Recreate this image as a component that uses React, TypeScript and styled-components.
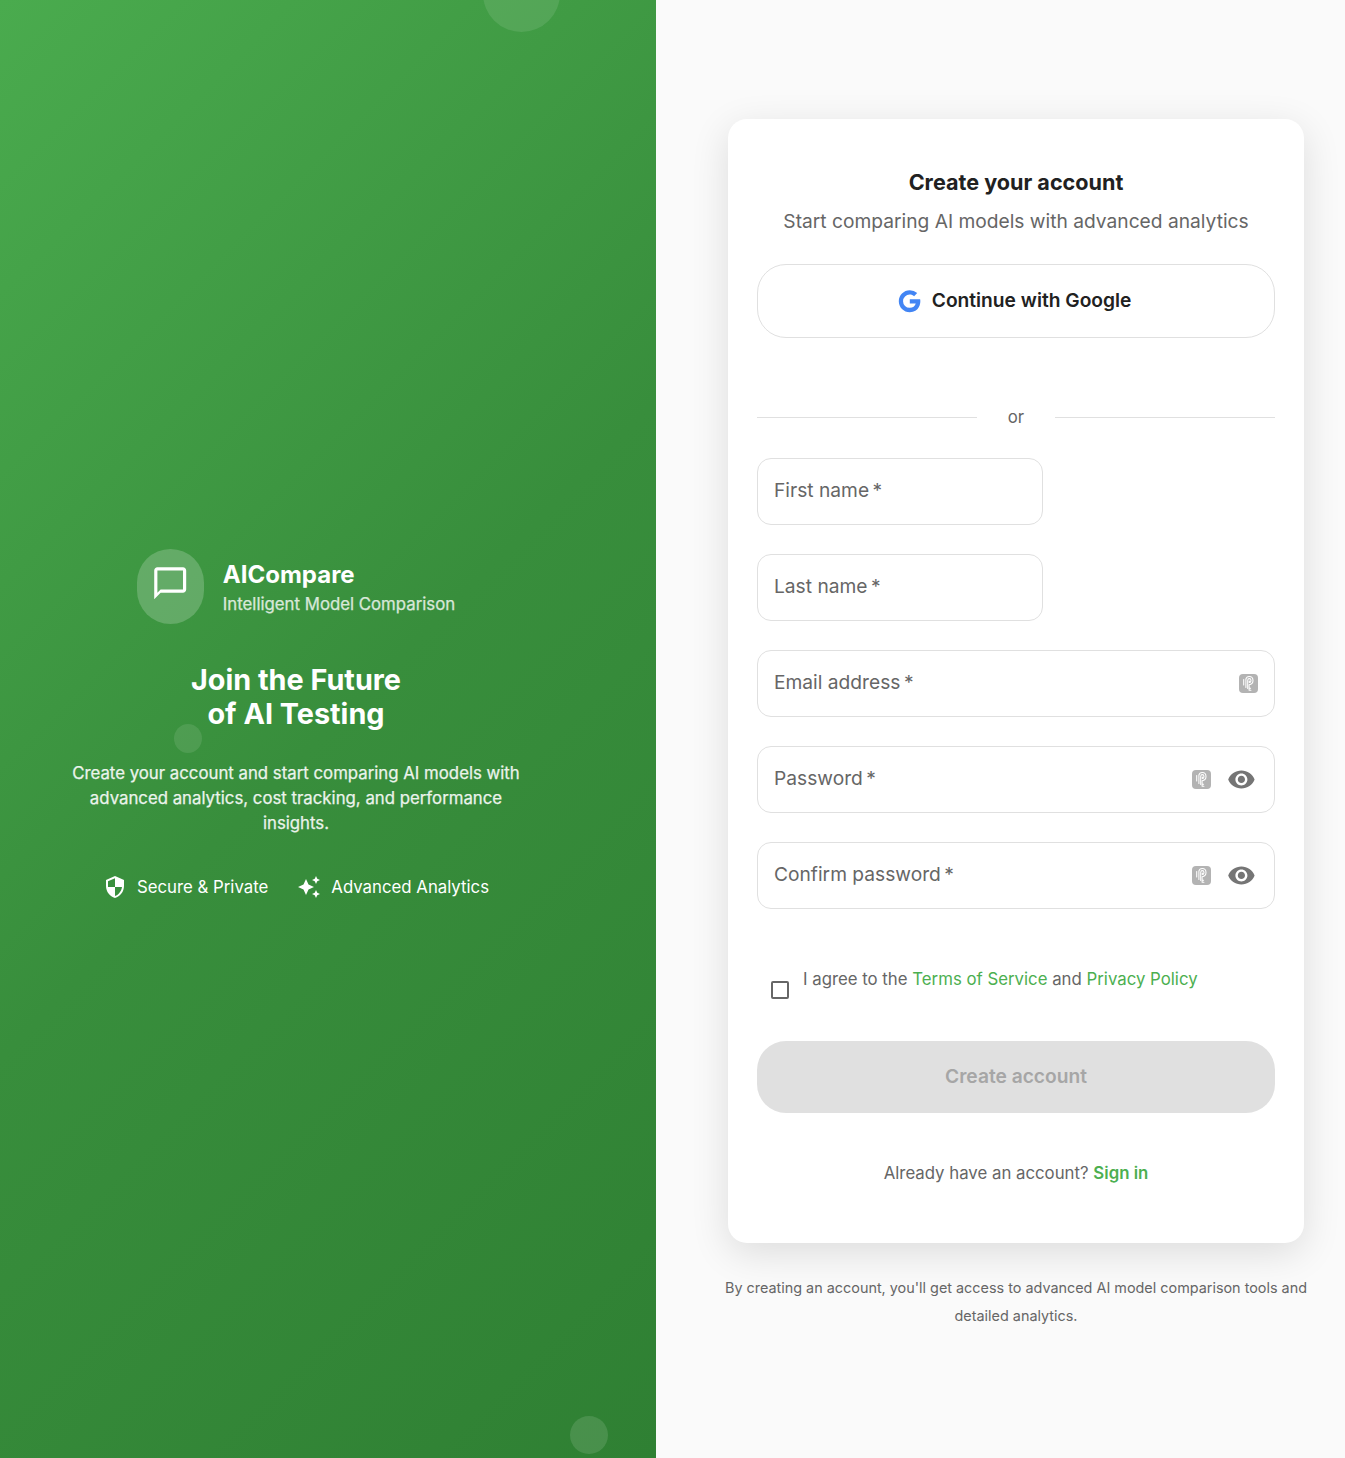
import React from "react";
import styled, { createGlobalStyle } from "styled-components";

const Global = createGlobalStyle`
  * { box-sizing: border-box; }
  body { margin: 0; background: #fafafa; font-family: Inter, Roboto, sans-serif; }
  p, h1, h2, h3 { margin: 0; }
`;

const Page = styled.div`
  display: grid;
  grid-template-columns: 656px 1fr;
  height: 1458px;
  overflow: hidden;
`;

const Brand = styled.aside`
  position: relative;
  overflow: hidden;
  display: flex;
  flex-direction: column;
  align-items: center;
  padding: 549px 136px 0 72px;
  color: #fff;
  text-align: center;
  background: linear-gradient(135deg, #4aab4e 0%, #388e3c 50%, #2f8033 100%);
`;

const Bubble = styled.span<{ $x: number; $y: number; $w: number; $h: number; $o: number }>`
  position: absolute;
  left: ${(p) => p.$x}px;
  top: ${(p) => p.$y}px;
  width: ${(p) => p.$w}px;
  height: ${(p) => p.$h}px;
  border-radius: 50%;
  background: rgba(255, 255, 255, ${(p) => p.$o});
`;

const LogoRow = styled.div`
  display: flex;
  align-items: center;
  gap: 19px;
  height: 75px;
  text-align: left;
`;

const LogoMark = styled.div`
  display: flex;
  justify-content: center;
  width: 67px;
  height: 75px;
  padding-top: 15px;
  border-radius: 34px;
  background: rgba(255, 255, 255, 0.2);
`;

const LogoText = styled.div`
  padding-top: 3px;
`;

const LogoName = styled.h1`
  font-size: 24px;
  line-height: 32px;
  font-weight: 700;
`;

const LogoTag = styled.p`
  font-size: 16.8px;
  line-height: 27px;
  font-weight: 400;
  opacity: 0.8;
  -webkit-text-stroke: 0.25px currentColor;
`;

const Headline = styled.h2`
  margin-top: 39px;
  font-size: 28.8px;
  line-height: 34px;
  font-weight: 700;
`;

const Pitch = styled.p`
  margin-top: 30px;
  width: 454px;
  font-size: 16.8px;
  line-height: 25px;
  opacity: 0.9;
  -webkit-text-stroke: 0.25px currentColor;
`;

const Features = styled.div`
  display: flex;
  gap: 29px;
  margin-top: 38px;
`;

const Feature = styled.div`
  display: flex;
  align-items: center;
  gap: 10px;
  font-size: 16.8px;
  line-height: 26px;
`;

const Main = styled.main`
  display: flex;
  flex-direction: column;
  align-items: center;
  padding: 119px 0 0 31px;
`;

const Card = styled.section`
  display: flex;
  flex-direction: column;
  width: 576px;
  height: 1124px;
  padding: 47px 29px 0;
  border-radius: 19px;
  background: #fff;
  box-shadow: 0 10px 38px rgba(0, 0, 0, 0.12);
`;

const Title = styled.h2`
  font-size: 21.6px;
  line-height: 32px;
  font-weight: 700;
  text-align: center;
  color: #212121;
`;

const Subtitle = styled.p`
  margin-top: 9px;
  font-size: 19.2px;
  line-height: 29px;
  text-align: center;
  color: #666;
`;

const GoogleButton = styled.button`
  display: flex;
  align-items: center;
  justify-content: center;
  gap: 9.6px;
  height: 74px;
  margin-top: 28px;
  padding: 0 0 2px;
  border: 1px solid #e0e0e0;
  border-radius: 29px;
  background: #fff;
  color: #212121;
  font: 600 19.2px/30px Inter, Roboto, sans-serif;
`;

const GoogleMark = styled.svg`
  margin: 2px 0 0 -4.8px;
  fill: #4285f4;
`;

const Divider = styled.div`
  display: flex;
  align-items: center;
  gap: 31px;
  height: 26px;
  margin-top: 66px;
  font-size: 16.8px;
  color: #666;
  &::before, &::after {
    content: "";
    flex: 1;
    height: 1px;
    background: #e0e0e0;
  }
`;

const Fields = styled.div`
  display: flex;
  flex-direction: column;
  gap: 29px;
  margin-top: 28px;
`;

const FieldBox = styled.label<{ $short?: boolean }>`
  display: flex;
  align-items: center;
  width: ${(p) => (p.$short ? "286px" : "100%")};
  height: 67px;
  padding: 0 16px;
  border: 1px solid #e0e0e0;
  border-radius: 14px;
  color: #666;
`;

const FieldLabel = styled.span`
  flex: 1;
  padding-bottom: 3px;
  font-size: 19.2px;
  line-height: 28px;
`;

const EyeWrap = styled.span`
  display: flex;
  margin: 0 2px 0 16px;
  color: #757575;
`;

const Terms = styled.div`
  display: flex;
  align-items: flex-start;
  height: 58px;
  margin-top: 57px;
  padding-left: 14px;
  font-size: 16.8px;
  line-height: 26px;
  color: #666;
`;

const Checkbox = styled.span`
  width: 18px;
  height: 18px;
  margin: 15px 14px 0 0;
  border: 2px solid #666;
  border-radius: 2px;
`;

const Link = styled.a<{ $bold?: boolean }>`
  color: #4caf50;
  font-weight: ${(p) => (p.$bold ? 600 : 400)};
`;

const Submit = styled.button`
  height: 72px;
  margin-top: 17px;
  padding: 0 0 2px;
  border: 0;
  border-radius: 29px;
  background: #e0e0e0;
  color: #a6a6a6;
  font: 600 19.2px/30px Inter, Roboto, sans-serif;
`;

const SignIn = styled.p`
  margin-top: 48px;
  font-size: 16.8px;
  line-height: 25px;
  text-align: center;
  color: #666;
`;

const Footnote = styled.p`
  width: 600px;
  margin-top: 31px;
  font-size: 14.4px;
  line-height: 28px;
  text-align: center;
  color: #666;
`;

const MdIcon = ({ d, size }: { d: string; size: number }) => (
  <svg width={size} height={size} viewBox="0 0 24 24" fill="currentColor">
    <path d={d} />
  </svg>
);

const CHAT = "M20 2H4c-1.1 0-1.99.9-1.99 2L2 22l4-4h14c1.1 0 2-.9 2-2V4c0-1.1-.9-2-2-2zm0 14H6l-2 2V4h16v12z";
const SHIELD = "M12 1 3 5v6c0 5.55 3.84 10.74 9 12 5.16-1.26 9-6.45 9-12V5l-9-4zm0 10.99h7c-.53 4.12-3.28 7.79-7 8.94V12H5V6.3l7-3.11v8.8z";
const SPARKLE = "m19 9 1.25-2.75L23 5l-2.75-1.25L19 1l-1.25 2.75L15 5l2.75 1.25L19 9zm-7.5.5L9 4 6.500 9.500 1 12l5.500 2.500L9 20l2.500-5.500L17 12l-5.500-2.500zM19 15l-1.250 2.750L15 19l2.750 1.250L19 23l1.250-2.750L23 19l-2.750-1.250L19 15z";
const GOOGLE = "M12.545 10.239v3.821h5.445c-.712 2.315-2.647 3.972-5.445 3.972a6.033 6.033 0 1 1 0-12.064c1.498 0 2.866.549 3.921 1.453l2.814-2.814A9.969 9.969 0 0 0 12.545 2C7.021 2 2.543 6.477 2.543 12s4.478 10 10.002 10c8.396 0 10.249-7.85 9.426-11.748l-9.426-.013z";
const EYE = "M12 4.5C7 4.5 2.73 7.61 1 12c1.73 4.39 6 7.5 11 7.5s9.27-3.11 11-7.5c-1.73-4.39-6-7.5-11-7.5zM12 17c-2.76 0-5-2.24-5-5s2.24-5 5-5 5 2.24 5 5-2.24 5-5 5zm0-8c-1.66 0-3 1.34-3 3s1.34 3 3 3 3-1.34 3-3-1.34-3-3-3z";

const PassBadge = () => (
  <svg width="19" height="19" viewBox="0 0 19 19" fill="none" stroke="#fff" strokeWidth="1.05" strokeLinecap="round" strokeLinejoin="round">
    <rect width="19" height="19" rx="4" fill="#b3b3b3" stroke="none" />
    <path d="M4.700 11V5.600" />
    <path d="M6.900 13.500V5C7.300 3.400 8.700 2.500 10.200 2.500C12.600 2.500 14 4.300 14 6.500C14 8.900 12.500 10.500 10.100 10.700V16.300H11.900M10.200 14.200H11.600" />
    <path d="M8.700 14.500V6.500C8.700 5.300 9.400 4.600 10.300 4.600C11.400 4.600 12 5.500 12 6.500C12 7.700 11.300 8.500 10.300 8.500V7" />
  </svg>
);

const fields = [
  { label: "First name", short: true },
  { label: "Last name", short: true },
  { label: "Email address", badge: true },
  { label: "Password", badge: true, eye: true },
  { label: "Confirm password", badge: true, eye: true },
];

export default function App() {
  return (
    <>
      <Global />
      <Page>
        <Brand>
          <Bubble $x={483} $y={-45} $w={77} $h={77} $o={0.1} />
          <Bubble $x={174} $y={724} $w={28} $h={29} $o={0.1} />
          <Bubble $x={570} $y={1416} $w={38} $h={38} $o={0.12} />
          <LogoRow>
            <LogoMark><MdIcon d={CHAT} size={38.4} /></LogoMark>
            <LogoText>
              <LogoName>AICompare</LogoName>
              <LogoTag>Intelligent Model Comparison</LogoTag>
            </LogoText>
          </LogoRow>
          <Headline>Join the Future<br />of AI Testing</Headline>
          <Pitch>Create your account and start comparing AI models with advanced analytics, cost tracking, and performance insights.</Pitch>
          <Features>
            <Feature><MdIcon d={SHIELD} size={24} />Secure &amp; Private</Feature>
            <Feature><MdIcon d={SPARKLE} size={24} />Advanced Analytics</Feature>
          </Features>
        </Brand>
        <Main>
          <Card>
            <Title>Create your account</Title>
            <Subtitle>Start comparing AI models with advanced analytics</Subtitle>
            <GoogleButton><GoogleMark width="26.4" height="26.4" viewBox="0 0 24 24"><path d={GOOGLE} /></GoogleMark>Continue with Google</GoogleButton>
            <Divider>or</Divider>
            <Fields>
              {fields.map((f) => (
                <FieldBox key={f.label} $short={f.short}>
                  <FieldLabel>{f.label}&thinsp;*</FieldLabel>
                  {f.badge && <PassBadge />}
                  {f.eye && <EyeWrap><MdIcon d={EYE} size={28.8} /></EyeWrap>}
                </FieldBox>
              ))}
            </Fields>
            <Terms>
              <Checkbox />
              <span>I agree to the <Link>Terms of Service</Link> and <Link>Privacy Policy</Link></span>
            </Terms>
            <Submit disabled>Create account</Submit>
            <SignIn>Already have an account? <Link $bold>Sign in</Link></SignIn>
          </Card>
          <Footnote>By creating an account, you'll get access to advanced AI model comparison tools and detailed analytics.</Footnote>
        </Main>
      </Page>
    </>
  );
}
